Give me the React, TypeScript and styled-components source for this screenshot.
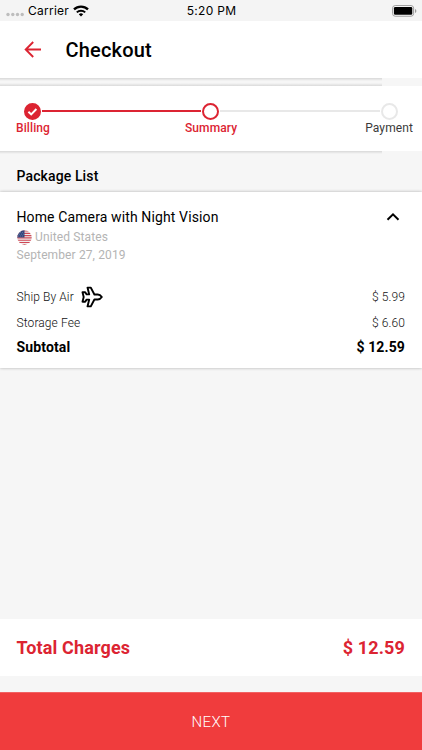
import React from "react";
import styled, { createGlobalStyle } from "styled-components";

const RED = "#dc2432";

const GlobalStyle = createGlobalStyle`
  * { box-sizing: border-box; }
  body { margin: 0; background: #f6f6f6; }
`;

const Screen = styled.main`
  width: 422px;
  height: 750px;
  display: flex;
  flex-direction: column;
  overflow: hidden;
  background: #f6f6f6;
  font-family: Roboto, sans-serif;
  color: #000;
`;

const StatusBar = styled.div`
  height: 21px;
  flex: none;
  display: grid;
  grid-template-columns: 1fr auto 1fr;
  align-items: center;
  padding: 0 5px 0 6px;
  background: #f4f4f4;
  font: 400 12px/20px Inter, sans-serif;
`;

const StatusSide = styled.div<{ $end?: boolean }>`
  display: flex;
  align-items: center;
  gap: 4px;
  justify-content: ${(p) => (p.$end ? "flex-end" : "flex-start")};
`;

const StatusText = styled.span<{ $spacing: number }>`
  letter-spacing: ${(p) => p.$spacing}px;
  white-space: nowrap;
`;

const Header = styled.header`
  height: 57px;
  flex: none;
  display: flex;
  align-items: center;
  gap: 23.5px;
  padding: 0 24px;
  background: #fff;
`;

const Title = styled.h1`
  margin: 0;
  font-size: 20px;
  line-height: 24px;
  font-weight: 500;
  letter-spacing: 0.2px;
`;

const Divider = styled.div`
  height: 8px;
  flex: none;
  background:
    linear-gradient(#d8d8d8, #f6f6f6) 0 0 / 382px 3px no-repeat,
    linear-gradient(#f6f6f6, #dadada) 0 100% / 382px 3px no-repeat,
    #f6f6f6;
`;

const Stepper = styled.nav`
  height: 65px;
  flex: none;
  padding: 16px 9px 0 16px;
  background: #fff;
`;

const Track = styled.div`
  display: flex;
  align-items: center;
  padding: 0 15.5px 0 8.4px;
  height: 18px;
`;

const Connector = styled.div<{ $done?: boolean }>`
  flex: 1;
  height: 2px;
  margin: 0 1px;
  background: ${(p) => (p.$done ? RED : "#e8e8e8")};
`;

const StepDot = styled.div<{ $state: "done" | "current" | "todo" }>`
  width: 17px;
  height: 17px;
  flex: none;
  display: grid;
  place-items: center;
  border-radius: 50%;
  border: 2px solid ${(p) => (p.$state === "todo" ? "#e8e8e8" : RED)};
  background: ${(p) => (p.$state === "done" ? RED : "#fff")};
`;

const StepLabels = styled.div`
  display: flex;
  justify-content: space-between;
  margin-top: 1px;
`;

const StepLabel = styled.span<{ $active?: boolean }>`
  font-size: 12px;
  line-height: 15px;
  font-weight: ${(p) => (p.$active ? 500 : 400)};
  color: ${(p) => (p.$active ? RED : "#3a3a3a")};
  letter-spacing: 0.1px;
  &:nth-child(2) { margin-left: 7px; }
`;

const SectionHeading = styled.h2`
  height: 41px;
  flex: none;
  margin: 0;
  padding: 15px 16.5px 0;
  font-size: 14px;
  line-height: 20px;
  font-weight: 500;
  letter-spacing: 0.12px;
  background: linear-gradient(#d8d8d8, #f6f6f6) 0 0 / 382px 3px no-repeat;
`;

const Card = styled.section`
  height: 176px;
  flex: none;
  padding: 15px 17px 0 16.5px;
  background: #fff;
  box-shadow: 0 0 3px rgba(0, 0, 0, 0.3);
`;

const Row = styled.div<{ $height: number }>`
  display: flex;
  align-items: center;
  justify-content: space-between;
  height: ${(p) => p.$height}px;
`;

const PackageSummary = styled.div`
  display: flex;
  align-items: center;
  justify-content: space-between;
  height: 20px;
  margin-bottom: 1px;
`;

const PackageName = styled.h3`
  margin: 0;
  font-size: 14px;
  line-height: 20px;
  font-weight: 400;
  letter-spacing: 0.12px;
`;

const Meta = styled.div`
  display: flex;
  align-items: center;
  gap: 3.5px;
  height: 18px;
  font-size: 12px;
  letter-spacing: 0.12px;
  color: #b4b4b4;
`;

const Fees = styled.div`
  margin-top: 20px;
`;

const FeeText = styled.span`
  display: flex;
  align-items: center;
  gap: 7px;
  font-size: 12px;
  font-weight: 300;
  color: #111;
  letter-spacing: 0.1px;
`;

const Subtotal = styled.span`
  font-size: 14px;
  font-weight: 700;
  letter-spacing: 0.13px;
`;

const TotalBar = styled.section`
  height: 57px;
  flex: none;
  margin-top: auto;
  margin-bottom: 16px;
  padding: 0 17px 0 16.5px;
  display: flex;
  align-items: center;
  justify-content: space-between;
  background: #fff;
  color: ${RED};
`;

const TotalText = styled.span`
  font-size: 18px;
  font-weight: 700;
  letter-spacing: 0.13px;
`;

const NextButton = styled.button`
  height: 58px;
  flex: none;
  border: 0;
  border-top: 1px solid #f26162;
  padding: 0;
  background: #f03c3d;
  color: #fff;
  font: 300 15px/20px Roboto, sans-serif;
  letter-spacing: 0.4px;
`;

const Signal = () => (
  <svg width="18" height="20" viewBox="0 0 18 20" fill="#bdbdbd">
    {[2, 6.8, 11.5, 16.2].map((x) => <circle key={x} cx={x} cy="13.5" r="1.7" />)}
  </svg>
);

const Wifi = () => (
  <svg width="16" height="12" viewBox="0 0 16 12" fill="none" stroke="#000">
    <path d="M1 4.4a10 10 0 0 1 14 0" strokeWidth="2.3" />
    <path d="M3.8 7.4a6 6 0 0 1 8.4 0" strokeWidth="2" />
    <path d="M8 11.5 5.8 9.3a3.2 3.2 0 0 1 4.4 0z" fill="#000" stroke="none" />
  </svg>
);

const Battery = () => (
  <svg width="25" height="12" viewBox="0 0 25 12">
    <rect x=".6" y=".6" width="21" height="10.6" rx="2.6" fill="#fff" stroke="#999" strokeWidth="1" />
    <rect x="1.9" y="2" width="18.4" height="7.8" rx="1.3" />
    <path d="M23 4v4q1.4-.5 1.4-2T23 4" fill="#999" />
  </svg>
);

const BackArrow = () => (
  <svg width="18" height="18" viewBox="0 0 18 18" fill="none" stroke={RED} strokeWidth="1.9">
    <path d="M17 8.5H2.2M9.2 1 1.7 8.5 9.2 16" />
  </svg>
);

const Check = () => (
  <svg width="13" height="13" viewBox="0 0 13 13" fill="none" stroke="#fff" strokeWidth="2">
    <path d="m2.4 6.7 2.8 2.7 5.2-5.4" />
  </svg>
);

const Flag = () => (
  <svg width="15" height="15" viewBox="0 0 15 15">
    <defs><clipPath id="flag-disc"><circle cx="7.5" cy="7.5" r="7.2" /></clipPath></defs>
    <g clipPath="url(#flag-disc)">
      <path fill="#f1eeee" d="M0 0h15v15H0z" />
      <path stroke="#cf4855" strokeWidth="1.15" d="M0 1h15M0 3.3h15M0 5.6h15M0 7.9h15M0 10.2h15M0 12.5h15M0 14.6h15" />
      <path fill="#34477e" d="M0 0h7.5v7.6H0z" />
      <path stroke="#9aa6c4" strokeWidth=".6" strokeDasharray=".7 1.3" d="M1 2.5h6M2 4.2h5M1 6h6" />
    </g>
  </svg>
);

const Plane = () => (
  <svg width="22" height="22" viewBox="0 0 22 22" fill="none" stroke="#000" strokeWidth="1.9" strokeLinejoin="round">
    <path d="M20.8 11c-1-1.5-2.2-2.5-4-2.5h-3.4L9.8 1.6H6.5l1.7 6.8H5.6L4.2 6.3H1.5L2.7 11l-1.2 4.7h2.7l1.4-2.1h2.6l-1.7 6.8h3.3l3.6-6.9h3.4c1.8 0 3-1 4-2.5z" />
  </svg>
);

const Chevron = () => (
  <svg width="24" height="12" viewBox="0 0 24 12" fill="none" stroke="#000" strokeWidth="2">
    <path d="m6.5 8.8 5.5-5.4 5.5 5.4" />
  </svg>
);

export default function App() {
  return (
    <>
      <GlobalStyle />
      <Screen>
        <StatusBar>
          <StatusSide>
            <Signal />
            <StatusText $spacing={0.25}>Carrier</StatusText>
            <Wifi />
          </StatusSide>
          <StatusText $spacing={0.3}>5:20 PM</StatusText>
          <StatusSide $end><Battery /></StatusSide>
        </StatusBar>
        <Header>
          <BackArrow />
          <Title>Checkout</Title>
        </Header>
        <Divider />
        <Stepper>
          <Track>
            <StepDot $state="done"><Check /></StepDot>
            <Connector $done />
            <StepDot $state="current" />
            <Connector />
            <StepDot $state="todo" />
          </Track>
          <StepLabels>
            <StepLabel $active>Billing</StepLabel>
            <StepLabel $active>Summary</StepLabel>
            <StepLabel>Payment</StepLabel>
          </StepLabels>
        </Stepper>
        <SectionHeading>Package List</SectionHeading>
        <Card>
          <PackageSummary>
            <PackageName>Home Camera with Night Vision</PackageName>
            <Chevron />
          </PackageSummary>
          <Meta><Flag />United States</Meta>
          <Meta>September 27, 2019</Meta>
          <Fees>
            <Row $height={26}>
              <FeeText>Ship By Air<Plane /></FeeText>
              <FeeText>$ 5.99</FeeText>
            </Row>
            <Row $height={25}>
              <FeeText>Storage Fee</FeeText>
              <FeeText>$ 6.60</FeeText>
            </Row>
            <Row $height={24}>
              <Subtotal>Subtotal</Subtotal>
              <Subtotal>$ 12.59</Subtotal>
            </Row>
          </Fees>
        </Card>
        <TotalBar>
          <TotalText>Total Charges</TotalText>
          <TotalText>$ 12.59</TotalText>
        </TotalBar>
        <NextButton>NEXT</NextButton>
      </Screen>
    </>
  );
}
